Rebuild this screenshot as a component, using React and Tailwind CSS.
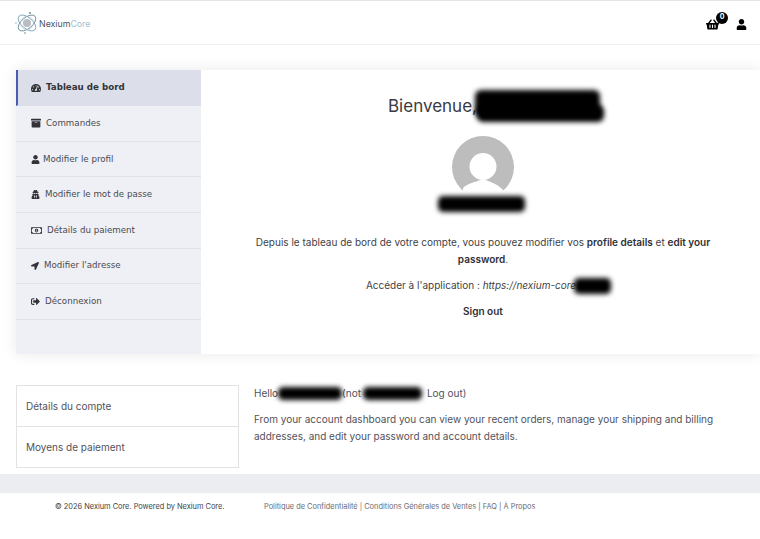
import { FaTachometerAlt, FaArchive, FaUser, FaUserSecret, FaRegMoneyBillAlt, FaLocationArrow, FaSignOutAlt, FaShoppingBasket } from 'react-icons/fa'

const NAV = [
  { label: 'Tableau de bord', Icon: FaTachometerAlt, box: 'w-[15px]', size: 'text-[10px]', active: true },
  { label: 'Commandes', Icon: FaArchive, box: 'w-[15px]', size: 'text-[10px]' },
  { label: 'Modifier le profil', Icon: FaUser, box: 'w-[12px]', size: 'text-[9px]' },
  { label: 'Modifier le mot de passe', Icon: FaUserSecret, box: 'w-[14px]', size: 'text-[9px]' },
  { label: 'Détails du paiement', Icon: FaRegMoneyBillAlt, box: 'w-[16px]', size: 'text-[11px]' },
  { label: "Modifier l'adresse", Icon: FaLocationArrow, box: 'w-[13px]', size: 'text-[8px]' },
  { label: 'Déconnexion', Icon: FaSignOutAlt, box: 'w-[14px]', size: 'text-[9px]' },
]

function Logo() {
  return (
    <svg width="24" height="24" viewBox="0 0 24 24" fill="none">
      <circle cx="12" cy="12" r="4" fill="#b9bcc0" />
      <ellipse cx="12" cy="12" rx="10.5" ry="5.5" stroke="#7fa9bd" strokeWidth="0.9" transform="rotate(40 12 12)" />
      <ellipse cx="12" cy="12" rx="10.5" ry="5.5" stroke="#6f8f9f" strokeWidth="0.9" transform="rotate(-40 12 12)" />
      <circle cx="12" cy="12" r="6.5" stroke="#a9c4d1" strokeWidth="0.6" />
      <circle cx="15" cy="2" r="1" fill="#7b8a92" />
      <circle cx="10" cy="22" r="0.9" fill="#8fb2c4" />
      <circle cx="1" cy="12" r="0.8" fill="#8fb2c4" />
    </svg>
  )
}

// blurred black block that hides private text
function Redact({ className }) {
  return <span className={`inline-block bg-black blur-[2.5px] rounded-[5px] align-middle ${className}`} />
}

function Avatar() {
  return (
    <svg width="62" height="62" viewBox="0 0 62 62" className="block">
      <circle cx="31" cy="31" r="31" fill="#bdbdbd" />
      <circle cx="31" cy="30.5" r="13.5" fill="#fff" />
      <path d="M11 52 C16 47 24 46 28 44 L34 44 C38 46 46 48 51 54 L51 62 L11 62 Z" fill="#fff" />
    </svg>
  )
}

export default function App() {
  return (
    <div className="w-[760px] h-[539px] overflow-hidden bg-white font-['Inter',sans-serif] text-[#3f3f46]">
      <header className="h-[45px] flex items-center justify-between pl-[15px] pr-[13px] border-t border-t-[#e5e5e5] border-b border-b-[#f0f0f0]">
        <div className="flex items-center">
          <Logo />
          <span className="text-[8.8px] text-[#4b5563] mt-[2px]">Nexium<span className="text-[#9cc3d8]">Core</span></span>
        </div>
        <div className="flex items-center gap-[17px] mt-[3px]">
          <div className="relative">
            <FaShoppingBasket className="text-[13px] text-black" />
            <span className="absolute -top-[6px] left-[10px] w-[12px] h-[12px] rounded-full bg-black text-white text-[7px] font-bold flex items-center justify-center">0</span>
          </div>
          <FaUser className="text-[11px] text-black" />
        </div>
      </header>

      <section className="flex ml-[16px] mt-[25px] h-[284px] shadow-[0_0_14px_rgba(0,0,0,0.09)]">
        <nav className="w-[185px] bg-[#eff0f5] font-['DejaVu_Sans',sans-serif] text-[#4a4a4f]">
          {NAV.map(({ label, Icon, box, size, active }) => (
            <div
              key={label}
              className={`flex items-center border-b text-[8.7px] ${
                active
                  ? 'h-[36.2px] bg-[#dcdfe9] border-b-[#dcdfe9] border-l-2 border-l-[#4a5bb5] pl-[13px] font-bold text-[#333338]'
                  : 'h-[35.6px] border-b-[#e2e3e8] pl-[15px]'
              }`}
            >
              <span className={`${box} shrink-0`}>
                <Icon className={`${size} text-[#333338]`} />
              </span>
              <span>{label}</span>
            </div>
          ))}
        </nav>

        <main className="w-[559px] bg-white flex flex-col items-center pt-[25px] pl-[5px]">
          <h1 className="flex items-center h-[24px] text-[17px] text-[#3a3a3f] w-full pl-[182px]">
            Bienvenue,
            <span className="relative w-[0px] h-[24px]">
              <span className="absolute -left-[2px] top-[-5px] w-[125px] h-[27px] bg-black blur-[2.5px] rounded-[6px]" />
              <span className="absolute left-0 top-[10px] w-[127px] h-[17px] bg-black blur-[2.5px] rounded-[6px]" />
            </span>
          </h1>
          <div className="mt-[17px]">
            <Avatar />
          </div>
          <Redact className="w-[87px] h-[16px] mt-[-2px] ml-[-3px]" />
          <p className="mt-[22px] w-[490px] text-center text-[10px] leading-[17px]">
            Depuis le tableau de bord de votre compte, vous pouvez modifier vos <b className="font-semibold text-[#2f2f34]">profile details</b> et <b className="font-semibold text-[#2f2f34]">edit your password</b>.
          </p>
          <p className="mt-[9px] ml-[11px] text-[10px] leading-[17px] flex items-center">
            Accéder à l'application :&nbsp;<i>https://nexium-core</i>
            <Redact className="w-[37px] h-[16px] -ml-[2px]" />
          </p>
          <p className="mt-[9px] text-[10px] leading-[17px] font-semibold text-[#2f2f34]">Sign out</p>
        </main>
      </section>

      <section className="flex ml-[16px] mt-[31px]">
        <div className="w-[223px] h-[83px] border border-[#e3e3e6] text-[10px] text-[#52525b]">
          <div className="h-[41px] flex items-center pl-[9px] border-b border-b-[#e3e3e6]">Détails du compte</div>
          <div className="h-[40px] flex items-center pl-[9px]">Moyens de paiement</div>
        </div>
        <div className="ml-[15px] text-[10px] leading-[17px] w-[470px] text-[#52525b]">
          <p className="flex items-center h-[17px]">
            Hello
            <Redact className="w-[64px] h-[13px] ml-[0px]" />
            <span>(not</span>
            <Redact className="w-[59px] h-[13px] ml-[2px]" />
            <span className="ml-[5px]">Log out)</span>
          </p>
          <p className="mt-[9px]">From your account dashboard you can view your recent orders, manage your shipping and billing addresses, and edit your password and account details.</p>
        </div>
      </section>

      <div className="h-[19px] mt-[6px] bg-[#ecedf0]" />

      <footer className="flex pl-[55px] pt-[8px] text-[7.4px]">
        <span className="w-[209px] text-[#3f3f46]">© 2026 Nexium Core. Powered by Nexium Core.</span>
        <span className="text-[#6b6b70]">Politique de Confidentialité | Conditions Générales de Ventes | FAQ | À Propos</span>
      </footer>
    </div>
  )
}
